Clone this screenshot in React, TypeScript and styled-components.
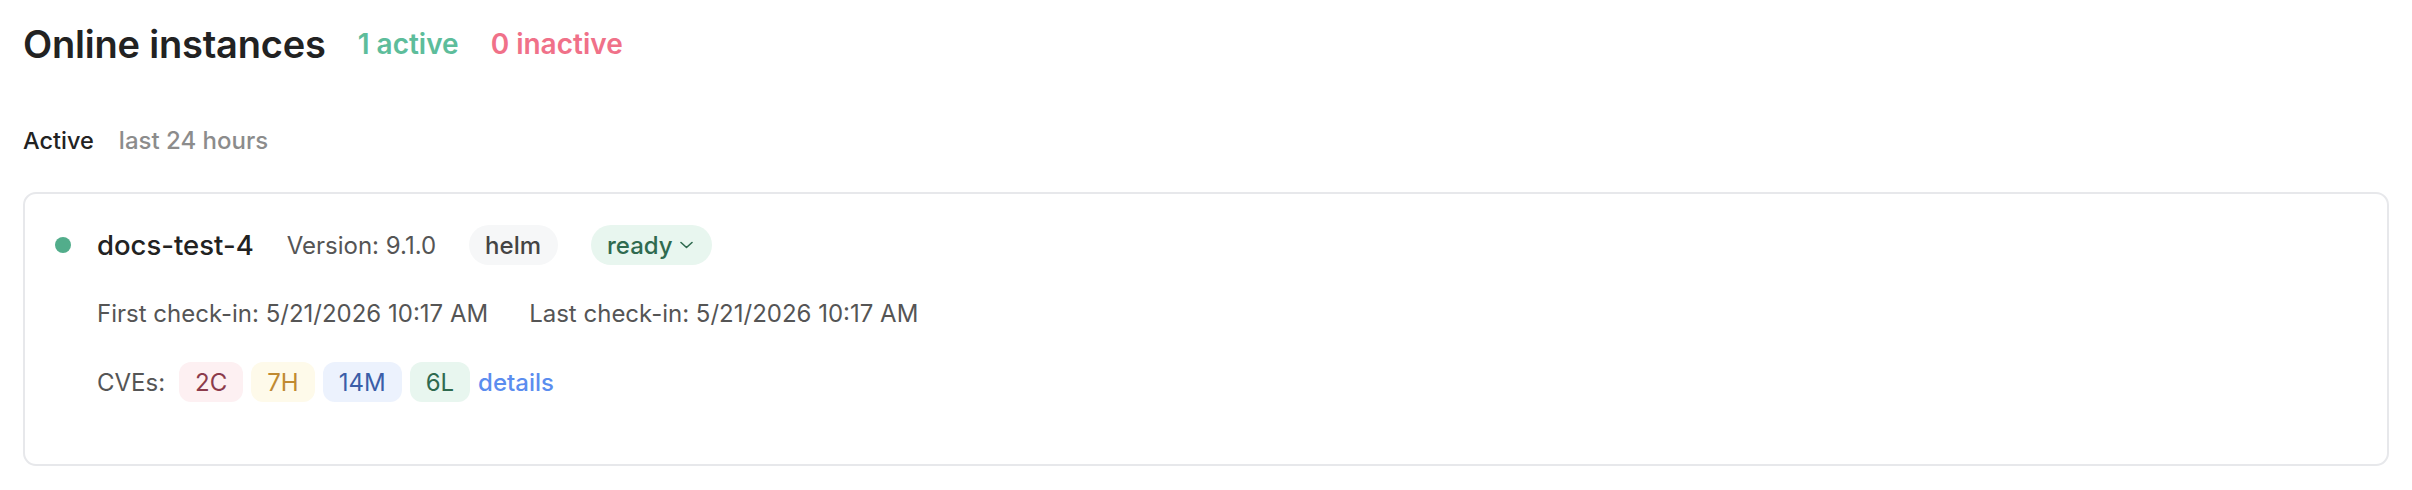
import React from 'react';
import styled, { createGlobalStyle } from 'styled-components';

const GlobalStyle = createGlobalStyle`
	body {
		margin: 0;
		background: #ffffff;
		font-family: Inter, 'Noto Sans', sans-serif;
		color: #222222;
	}
`;

const Page = styled.div`
	padding: 21px 23px;
`;

const Header = styled.div`
	display: flex;
	align-items: center;
	gap: 32px;
`;

const Title = styled.h1`
	margin: 0;
	font-size: 38px;
	font-weight: 600;
	letter-spacing: -0.2px;
	color: #222222;
`;

const Count = styled.span<{ tone: string }>`
	font-size: 28px;
	font-weight: 600;
	color: ${(props) => props.tone};
`;

const SectionLabel = styled.div`
	display: flex;
	align-items: baseline;
	gap: 25px;
	margin-top: 59px;
`;

const SectionName = styled.span`
	font-size: 23.5px;
	font-weight: 500;
	color: #222222;
`;

const SectionHint = styled.span`
	font-size: 24px;
	font-weight: 500;
	color: #8c8c8c;
`;

const Card = styled.div`
	margin-top: 37px;
	border: 2px solid #e7e8eb;
	border-radius: 13px;
	padding: 31px 30px 62px;
	display: grid;
	grid-template-columns: 16px 1fr;
	column-gap: 26px;
	row-gap: 34px;
	align-items: center;
`;

const Dot = styled.span`
	width: 16px;
	height: 16px;
	border-radius: 50%;
	background: #52ad8b;
`;

const Line = styled.div<{ gap: number }>`
	grid-column: 2;
	display: flex;
	align-items: center;
	gap: ${(props) => props.gap}px;
	font-size: 24px;
	color: #555555;
`;

const Name = styled.span`
	font-size: 27.5px;
	font-weight: 500;
	color: #222222;
`;

const Pill = styled.span<{ bg: string; fg: string }>`
	display: inline-flex;
	align-items: center;
	gap: 7px;
	height: 40px;
	padding: 0 17px 0 16px;
	border-radius: 20px;
	background: ${(props) => props.bg};
	color: ${(props) => props.fg};
	font-size: 24px;
	font-weight: 500;
`;

const ChevronIcon = styled.svg`
	margin-right: 2px;
`;

const CveLabel = styled.span`
	margin-right: 6px;
`;

const Badge = styled.span<{ bg: string; fg: string }>`
	display: inline-flex;
	align-items: center;
	height: 40px;
	padding: 0 16px;
	border-radius: 12px;
	background: ${(props) => props.bg};
	color: ${(props) => props.fg};
	font-size: 24px;
`;

const DetailsLink = styled.a`
	color: #5b8def;
	font-size: 24px;
	font-weight: 500;
	text-decoration: none;
`;

const Chevron = () => (
	<ChevronIcon width="13" height="8" viewBox="0 0 13 8" fill="none">
		<path d="M1 1.5l5.5 5 5.5-5" stroke="currentColor" strokeWidth="1.6" strokeLinecap="round" strokeLinejoin="round" />
	</ChevronIcon>
);

const cves = [
	{ label: '2C', bg: '#fdf0f2', fg: '#8c3b4c' },
	{ label: '7H', bg: '#fefaea', fg: '#c08a32' },
	{ label: '14M', bg: '#ecf2fd', fg: '#3b5ea8' },
	{ label: '6L', bg: '#e8f6ef', fg: '#2f6a4f' }
];

const App: React.FC = () => {
	return (
		<Page>
			<GlobalStyle />
			<Header>
				<Title>Online instances</Title>
				<Count tone="#5dbd9b">1 active</Count>
				<Count tone="#f07189">0 inactive</Count>
			</Header>
			<SectionLabel>
				<SectionName>Active</SectionName>
				<SectionHint>last 24 hours</SectionHint>
			</SectionLabel>
			<Card>
				<Dot />
				<Line gap={33}>
					<Name>docs-test-4</Name>
					<span>Version: 9.1.0</span>
					<Pill bg="#f6f7f8" fg="#444444">helm</Pill>
					<Pill bg="#e8f6ef" fg="#2f6a4f">
						ready
						<Chevron />
					</Pill>
				</Line>
				<Line gap={41}>
					<span>First check-in: 5/21/2026 10:17 AM</span>
					<span>Last check-in: 5/21/2026 10:17 AM</span>
				</Line>
				<Line gap={8}>
					<CveLabel>CVEs:</CveLabel>
					{cves.map((cve) => (
						<Badge key={cve.label} bg={cve.bg} fg={cve.fg}>
							{cve.label}
						</Badge>
					))}
					<DetailsLink href="#">details</DetailsLink>
				</Line>
			</Card>
		</Page>
	);
};

export default App;
